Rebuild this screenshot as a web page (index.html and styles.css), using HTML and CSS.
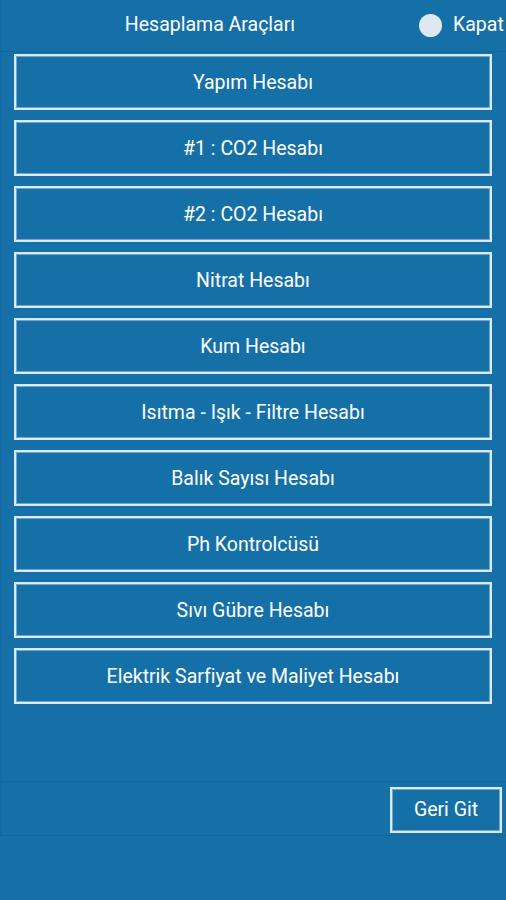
FILE: index.html
```html
<!DOCTYPE html>
<html lang="tr">
<head>
<meta charset="utf-8">
<title>Hesaplama Araçları</title>
<link rel="stylesheet" href="styles.css">
</head>
<body>
<div class="screen">
  <header class="header">
    <div class="title">Hesaplama Araçları</div>
    <div class="close">
      <span class="dot"></span>
      <span class="close-label">Kapat</span>
    </div>
  </header>
  <main class="panel">
    <button class="tool">Yapım Hesabı</button>
    <button class="tool">#1 : CO2 Hesabı</button>
    <button class="tool">#2 : CO2 Hesabı</button>
    <button class="tool">Nitrat Hesabı</button>
    <button class="tool">Kum Hesabı</button>
    <button class="tool">Isıtma - Işık - Filtre Hesabı</button>
    <button class="tool">Balık Sayısı Hesabı</button>
    <button class="tool">Ph Kontrolcüsü</button>
    <button class="tool">Sıvı Gübre Hesabı</button>
    <button class="tool">Elektrik Sarfiyat ve Maliyet Hesabı</button>
  </main>
  <footer class="footer">
    <button class="back">Geri Git</button>
  </footer>
</div>
</body>
</html>
```

FILE: styles.css
```css
html, body {
  margin: 0;
  padding: 0;
  background: #1670a8;
}
body {
  width: 506px;
  height: 900px;
  overflow: hidden;
  font-family: Roboto, "Liberation Sans", sans-serif;
  color: #ffffff;
}
.screen {
  display: flex;
  flex-direction: column;
  height: 900px;
}
.header {
  height: 51px;
  display: flex;
  align-items: center;
  border-bottom: 1px solid #13679c;
  border-left: 2px solid #1469a0;
}
.title {
  width: 416px;
  text-align: center;
  font-size: 19.5px;
  padding-bottom: 2px;
}
.close {
  display: flex;
  align-items: center;
  gap: 11px;
  margin-left: 1px;
  white-space: nowrap;
}
.dot {
  width: 23px;
  height: 23px;
  border-radius: 50%;
  background: #dde8f0;
  flex: none;
}
.close-label {
  font-size: 19.5px;
  padding-bottom: 2px;
}
.panel {
  height: 730px;
  display: flex;
  flex-direction: column;
  gap: 10px;
  padding: 2px 14px 0 12px;
  box-sizing: border-box;
  border-left: 2px solid #1469a0;
  border-bottom: 1px solid #13679c;
}
.tool {
  height: 56px;
  width: 478px;
  background: #1670a8;
  border: 2px solid #dbe9f4;
  box-shadow: inset 0 0 0 1px #6ea6cc;
  color: #ffffff;
  font-family: Roboto, "Liberation Sans", sans-serif;
  font-size: 19.5px;
  padding: 0;
  margin: 0;
  text-align: center;
}
.footer {
  height: 54px;
  box-sizing: border-box;
  display: flex;
  align-items: center;
  justify-content: flex-end;
  border-left: 2px solid #1469a0;
  border-bottom: 1px solid #13679c;
  padding: 2px 4px 0 0;
}
.back {
  width: 112px;
  height: 46px;
  background: #1670a8;
  border: 2px solid #dbe9f4;
  box-shadow: inset 0 0 0 1px #6ea6cc;
  color: #ffffff;
  font-family: Roboto, "Liberation Sans", sans-serif;
  font-size: 19.5px;
  padding: 0;
  margin: 0;
}
```
